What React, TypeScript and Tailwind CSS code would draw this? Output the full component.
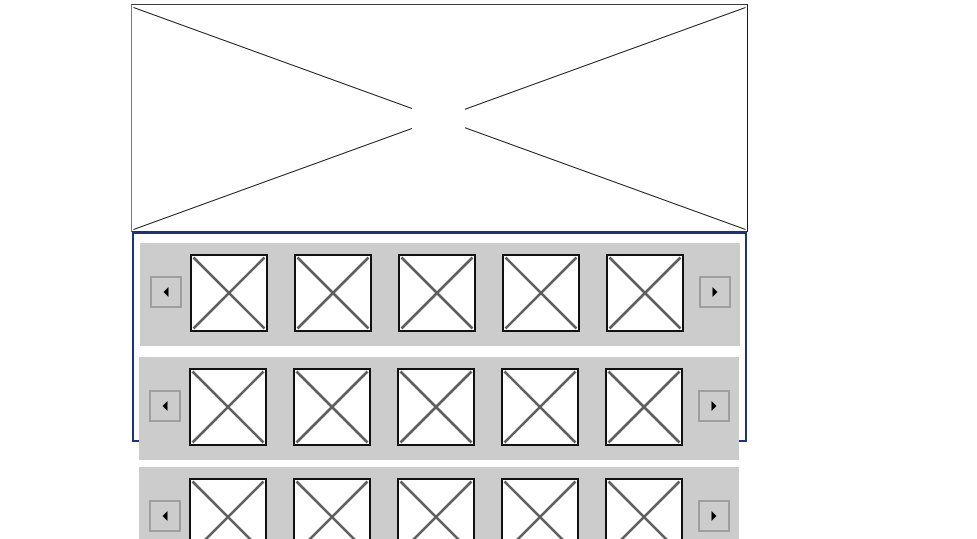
import React from 'react';

function Thumb() {
  return (
    <div className="w-[78px] h-[78px] shrink-0 border-2 border-[#111] bg-white">
      <svg width="74" height="74" viewBox="0 0 74 74" className="block">
        <line x1="1.5" y1="1.5" x2="72.5" y2="72.5" stroke="#5e5e5e" strokeWidth="2.6" />
        <line x1="72.5" y1="1.5" x2="1.5" y2="72.5" stroke="#5e5e5e" strokeWidth="2.6" />
      </svg>
    </div>
  );
}

function ArrowButton({ dir }: { dir: 'left' | 'right' }) {
  return (
    <div className="w-[32px] h-[32px] shrink-0 mt-[22px] border-2 border-[#9e9e9e] flex items-center justify-center">
      <svg width="6" height="10" viewBox="0 0 6 10" className="block">
        {dir === 'left' ? (
          <polygon points="5.5,0 5.5,10 0.5,5" fill="#000" />
        ) : (
          <polygon points="0.5,0 0.5,10 5.5,5" fill="#000" />
        )}
      </svg>
    </div>
  );
}

function Carousel({ className }: { className: string }) {
  return (
    <div className={`relative w-[600px] h-[103px] bg-[#cccccc] flex items-start pt-[11px] pl-[10px] ${className}`}>
      <ArrowButton dir="left" />
      <div className="flex gap-[26px] ml-[8px]">
        {[0, 1, 2, 3, 4].map((i) => (
          <Thumb key={i} />
        ))}
      </div>
      <div className="ml-[15px]">
        <ArrowButton dir="right" />
      </div>
    </div>
  );
}

function HeroPlaceholder() {
  return (
    <div className="w-[617px] h-[228px] border border-t-[#3a3a3a] border-l-[#7a7a7a] border-r-[#1a1a1a] border-b-[#333] bg-white">
      <svg width="615" height="226" viewBox="0 0 615 226" className="block">
        <line x1="1.5" y1="2.5" x2="613.5" y2="224.5" stroke="#111" strokeWidth="1" />
        <line x1="613.5" y1="2.5" x2="1.5" y2="224.5" stroke="#111" strokeWidth="1" />
        <rect x="280" y="100" width="53" height="26" fill="#fff" />
      </svg>
    </div>
  );
}

export default function App() {
  return (
    <div className="w-[977px] h-[539px] overflow-hidden bg-white pl-[131px] pt-[4px]">
      <HeroPlaceholder />
      <div className="ml-[1px] w-[615px] h-[210px] border-2 border-[#1e3282]">
        <Carousel className="ml-[6px] mt-[9px]" />
        <Carousel className="ml-[5px] mt-[11px]" />
        <Carousel className="ml-[5px] mt-[7px]" />
      </div>
    </div>
  );
}
